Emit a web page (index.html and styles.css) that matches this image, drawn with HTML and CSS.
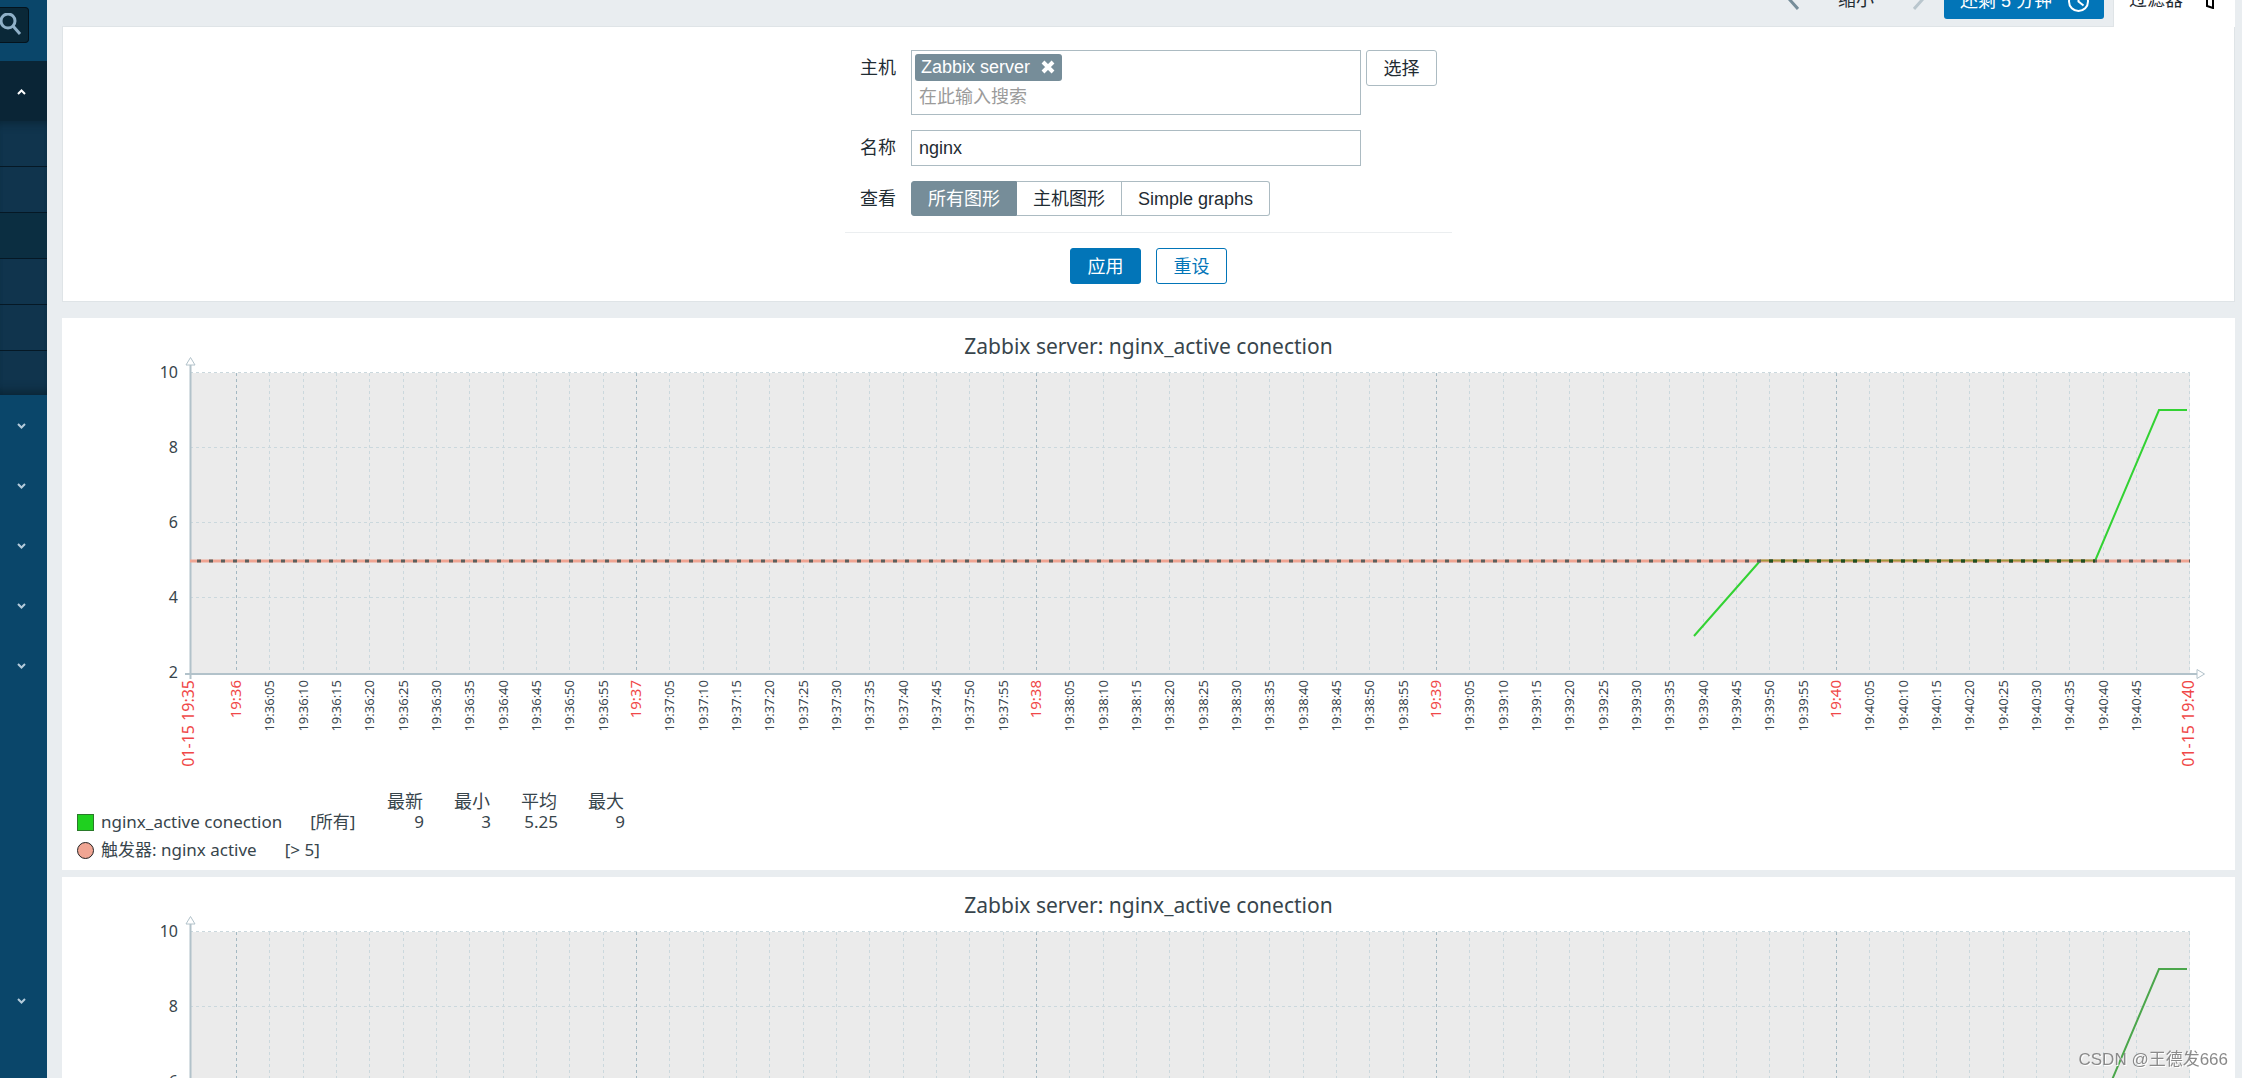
FILE: index.html
```html
<!DOCTYPE html>
<html lang="zh-CN">
<head>
<meta charset="utf-8">
<title>Zabbix</title>
<link rel="stylesheet" href="styles.css">
</head>
<body>
<div class="app">
  <aside class="sidebar">
    <button class="search" type="button" aria-label="搜索">
      <svg width="24" height="24" viewBox="0 0 24 24"><circle cx="9" cy="8" r="7"/><path d="M14 13l7 8" class="handle"/></svg>
    </button>
    <nav class="menu">
      <a class="item active" href="#" aria-label="监测"><svg class="chev" viewBox="0 0 9 6"><path d="M1 5l3.500-3.500L8 5"/></svg></a>
      <div class="submenu">
        <a class="sub" href="#" aria-label="仪表板"></a>
        <a class="sub" href="#" aria-label="问题"></a>
        <a class="sub current" href="#" aria-label="主机"></a>
        <a class="sub" href="#" aria-label="最新数据"></a>
        <a class="sub" href="#" aria-label="拓扑图"></a>
        <a class="sub" href="#" aria-label="自动发现"></a>
      </div>
      <a class="item" href="#" aria-label="服务"><svg class="chev" viewBox="0 0 9 6"><path d="M1 1l3.500 3.500L8 1"/></svg></a>
      <a class="item" href="#" aria-label="资产"><svg class="chev" viewBox="0 0 9 6"><path d="M1 1l3.500 3.500L8 1"/></svg></a>
      <a class="item" href="#" aria-label="报表"><svg class="chev" viewBox="0 0 9 6"><path d="M1 1l3.500 3.500L8 1"/></svg></a>
      <a class="item" href="#" aria-label="配置"><svg class="chev" viewBox="0 0 9 6"><path d="M1 1l3.500 3.500L8 1"/></svg></a>
      <a class="item" href="#" aria-label="管理"><svg class="chev" viewBox="0 0 9 6"><path d="M1 1l3.500 3.500L8 1"/></svg></a>
      <a class="item user" href="#" aria-label="用户设置"><svg class="chev" viewBox="0 0 9 6"><path d="M1 1l3.500 3.500L8 1"/></svg></a>
    </nav>
  </aside>

  <main class="content">
    <header class="tabs">
      <div class="time-nav">
        <button class="plain" type="button" aria-label="向前"><svg class="arrow" viewBox="0 0 11 20"><path d="M10 1L2 10l8 9"/></svg></button>
        <button class="plain" type="button">缩小</button>
        <button class="plain" type="button" aria-label="向后"><svg class="arrow off" viewBox="0 0 11 20"><path d="M1 1l8 9-8 9"/></svg></button>
      </div>
      <button class="period" type="button">还剩 5 分钟
        <svg width="21" height="21" viewBox="0 0 21 21"><circle cx="10.500" cy="10.500" r="9.500"/><path d="M10.500 4v6.500l5 4"/></svg>
      </button>
      <a class="filter-tab" href="#filter">过滤器
        <svg width="18" height="18" viewBox="0 0 18 18"><path d="M1 1h16l-4 7v9l-6-2V8z"/></svg>
      </a>
    </header>

    <form class="filter" id="filter">
      <div class="fields">
        <label for="host">主机</label>
        <div class="host-row">
          <div class="multiselect">
            <span class="tag">Zabbix server
              <button class="remove" type="button" aria-label="删除"><svg width="14" height="14" viewBox="0 0 14 14"><path d="M2 2l10 10M12 2L2 12"/></svg></button>
            </span>
            <input id="host" type="text" placeholder="在此输入搜索">
          </div>
          <button class="btn select" type="button">选择</button>
        </div>
        <label for="name">名称</label>
        <input class="name" id="name" type="text" value="nginx">
        <span class="label" id="show-label">查看</span>
        <div class="segmented" role="radiogroup" aria-labelledby="show-label">
          <input type="radio" name="show" id="show-all" checked><label for="show-all">所有图形</label>
          <input type="radio" name="show" id="show-host"><label for="show-host">主机图形</label>
          <input type="radio" name="show" id="show-simple"><label for="show-simple">Simple graphs</label>
        </div>
      </div>
      <div class="actions">
        <button class="btn primary" type="button">应用</button>
        <button class="btn outline" type="reset">重设</button>
      </div>
    </form>

    <section class="graph">
      <h2>Zabbix server: nginx_active conection</h2>
      <svg class="plot" data-line="#33d233" viewBox="0 0 2173 436"></svg>
      <table class="legend">
        <thead><tr><th></th><th>最新</th><th>最小</th><th>平均</th><th>最大</th></tr></thead>
        <tbody>
          <tr><td><div class="key"><i class="square"></i><span class="series-name">nginx_active conection</span>[所有]</div></td><td>9</td><td>3</td><td>5.25</td><td>9</td></tr>
          <tr><td colspan="5"><div class="key"><i class="circle"></i><span class="series-name">触发器: nginx active</span>[&gt; 5]</div></td></tr>
        </tbody>
      </table>
    </section>

    <section class="graph">
      <h2>Zabbix server: nginx_active conection</h2>
      <svg class="plot" data-line="#4ba64b" viewBox="0 0 2173 436"></svg>
    </section>
  </main>
</div>
<div class="watermark">CSDN @王德发666</div>
<script src="chart.js"></script>
</body>
</html>
```
FILE: chart.js
```js
const NS = 'http://www.w3.org/2000/svg';
const LEFT = 128, RIGHT = 2128, TOP = 18, BOTTOM = 319;
const MINUTE = 400, FIRST = 175;

function add(svg, tag, attrs, text) {
  const el = document.createElementNS(NS, tag);
  for (const key in attrs) el.setAttribute(key, attrs[key]);
  if (text) el.textContent = text;
  svg.appendChild(el);
}

function label(svg, x, cls, text) {
  add(svg, 'text', { class: cls, transform: `translate(${x + 4} 325) rotate(-90)` }, text);
}

function draw(svg) {
  add(svg, 'rect', { class: 'area', x: LEFT, y: TOP, width: RIGHT - LEFT, height: BOTTOM - TOP });

  [10, 8, 6, 4, 2].forEach((value, i) => {
    const y = TOP + i * 75 - .5;
    if (value > 2) add(svg, 'path', { class: 'grid', d: `M${LEFT} ${y}H${RIGHT}` });
    add(svg, 'text', { class: 'value', x: 116, y: y + 5 }, String(value));
  });

  for (let m = 0; m < 5; m++) {
    for (let s = 0; s < 60; s += 5) {
      if (m === 4 && s > 45) break;
      const x = Math.round(FIRST + m * MINUTE + s * MINUTE / 60) - .5;
      const major = s === 0;
      const hour = `19:${36 + m}`;
      add(svg, 'path', { class: major ? 'grid major' : 'grid', d: `M${x} ${TOP}V${BOTTOM}` });
      label(svg, x, major ? 'time major' : 'time', major ? hour : `${hour}:${String(s).padStart(2, '0')}`);
    }
  }
  add(svg, 'path', { class: 'grid', d: `M${RIGHT - .5} ${TOP}V${BOTTOM}` });
  label(svg, LEFT, 'time date', '01-15 19:35');
  label(svg, RIGHT, 'time date', '01-15 19:40');

  add(svg, 'path', { class: 'axis', d: `M${LEFT + .5} 10V${BOTTOM + 5}M${LEFT - 5} ${BOTTOM}H2135` });
  add(svg, 'path', { class: 'axis tip', d: 'M124 10h9l-4.500-7.500zM2135 314.500v9l7.500-4.500z' });

  add(svg, 'path', { class: 'trigger', d: `M${LEFT} 206H${RIGHT}` });
  add(svg, 'path', { class: 'series', stroke: svg.dataset.line, d: 'M1632 281L1698 206M2033 206L2097 55H2125' });
  add(svg, 'path', { class: 'overlap', d: 'M1698 205.500H2033' });
  add(svg, 'path', { class: 'trigger-dash', d: `M${LEFT + 7} 206H${RIGHT}` });
  add(svg, 'path', { class: 'trigger-dash dark', d: 'M1707 206H2033' });
}

document.querySelectorAll('.plot').forEach(draw);
```
FILE: styles.css
```css
* { box-sizing: border-box; }

body {
  margin: 0;
  background: #e9edf0;
  color: #1f2c33;
  font: 18px/20px "Liberation Sans", "Noto Sans CJK SC", sans-serif;
}

button, input { font: inherit; color: inherit; }
button { cursor: pointer; padding: 0; }
svg { display: block; fill: none; }

.app { display: flex; height: 100vh; overflow: hidden; }

/* Sidebar */
.sidebar {
  flex: 0 0 47px;
  display: flex;
  flex-direction: column;
  padding-top: 7px;
  background: #0a466a;
}
.search {
  width: 29px;
  height: 36px;
  margin-bottom: 18px;
  border: 1px solid #04131d;
  border-left: 0;
  border-radius: 0 4px 4px 0;
  background: #0a2838;
  flex: none;
}
.search svg { stroke: #8fb0c8; stroke-width: 3; margin-left: -1px; }
.menu { flex: 1; display: flex; flex-direction: column; padding-bottom: 48px; }
.item { flex: 0 0 60px; display: flex; align-items: center; padding: 2px 0 0 17px; }
.item.active { background: #0a2536; }
.item.user { margin-top: auto; }
.chev { width: 9px; height: 6px; stroke: #b4cbdb; stroke-width: 2; }
.active .chev { stroke: #fff; }
.submenu {
  flex: none;
  background: #10344d;
  box-shadow: inset 0 10px 10px -8px #0a2536, inset 0 -12px 10px -8px #0a2536;
}
.sub { display: block; height: 46px; border-bottom: 1px solid #051825; }
.sub:last-child { height: 44px; border: 0; }
.sub.current { background: #0b2e41; }

/* Header tabs, scrolled partly out of view */
.content { flex: 1; min-width: 0; padding: 0 7px 0 15px; }
.tabs {
  display: flex;
  justify-content: flex-end;
  height: 45px;
  margin-top: -19px;
}
.time-nav { display: flex; gap: 39px; height: 38px; margin-right: 20px; }
.plain { border: 0; background: none; }
.arrow { width: 11px; height: 20px; stroke: #768d99; stroke-width: 3; }
.arrow.off { stroke: #b9c6cd; }
.period {
  display: flex;
  align-items: center;
  gap: 16px;
  height: 36px;
  margin: 2px 9px 0 0;
  padding: 0 15px 0 16px;
  border: 0;
  border-radius: 3px;
  background: #0275b8;
  color: #fff;
}
.period svg { stroke: #fff; stroke-width: 2; }
.filter-tab {
  position: relative;
  display: flex;
  gap: 17px;
  height: 46px;
  padding: 9px 17px 0 15px;
  border-left: 1px solid #dfe4e7;
  background: #fff;
  color: inherit;
  text-decoration: none;
}
.filter-tab svg { stroke: #000; stroke-width: 2; margin-top: 1px; }

/* Filter form */
.filter {
  display: flex;
  flex-direction: column;
  align-items: center;
  padding: 23px 0 17px;
  border: 1px solid #dfe4e7;
  background: #fff;
}
.fields {
  display: grid;
  grid-template-columns: 51px 526px;
  gap: 15px 0;
  width: 607px;
  padding: 0 15px 16px;
  border-bottom: 1px solid #ebeef0;
}
.fields > label, .label { padding-top: 8px; }
.host-row { display: flex; align-items: flex-start; gap: 5px; }
.multiselect {
  width: 450px;
  height: 65px;
  padding: 3px;
  border: 1px solid #acbbc2;
}
.tag {
  display: inline-flex;
  align-items: center;
  gap: 11px;
  height: 27px;
  padding: 0 7px 2px 6px;
  border-radius: 3px;
  background: #768d99;
  color: #fff;
  vertical-align: top;
}
.remove { border: 0; background: none; }
.remove svg { stroke: #fff; stroke-width: 4; }
.multiselect input {
  display: block;
  width: 100%;
  height: 32px;
  padding: 0 4px;
  border: 0;
  outline: 0;
  background: none;
}
.multiselect input::placeholder { color: #9b9b9b; }
.btn {
  width: 71px;
  height: 36px;
  padding-top: 2px;
  border: 1px solid #acbbc2;
  border-radius: 3px;
  background: #fff;
}
.name {
  width: 450px;
  height: 36px;
  padding: 0 7px;
  border: 1px solid #acbbc2;
  background: #fff;
}
.segmented { display: flex; height: 35px; }
.segmented input { position: absolute; opacity: 0; pointer-events: none; }
.segmented label {
  display: flex;
  align-items: center;
  padding: 0 16px;
  border: 1px solid #acbbc2;
  border-left-width: 0;
}
.segmented label:first-of-type { border-left-width: 1px; border-radius: 3px 0 0 3px; }
.segmented label:last-of-type { border-radius: 0 3px 3px 0; }
.segmented input:checked + label { background: #768d99; border-color: #768d99; color: #fff; }
.actions { display: flex; gap: 15px; padding-top: 15px; }
.primary { background: #0275b8; border-color: #0275b8; color: #fff; }
.outline { border-color: #0275b8; color: #0275b8; }

/* Graphs */
.graph {
  margin-top: 16px;
  padding-bottom: 3px;
  background: #fff;
  color: #38454c;
  font-family: "Noto Sans", "Noto Sans CJK SC", sans-serif;
}
.graph + .graph { margin-top: 7px; }
.graph h2 {
  margin: 0;
  padding-top: 13px;
  height: 37px;
  font-size: 21px;
  line-height: 30px;
  font-weight: 400;
  text-align: center;
}
.plot { width: 100%; overflow: visible; }
.area { fill: #ebebeb; }
.grid { stroke: #cbd8dd; stroke-width: 1; stroke-dasharray: 3 3; }
.grid.major { stroke: #a3b8c2; }
.axis { stroke: #b2c2ca; stroke-width: 2; }
.axis.tip { fill: #fff; stroke-width: 1; }
.value { fill: #38454c; font-size: 16px; text-anchor: end; }
.time { fill: #38454c; font-size: 13px; text-anchor: end; }
.time.major { fill: #f04848; font-size: 15px; }
.time.date { fill: #f04848; font-size: 16px; }
.trigger { stroke: #efa593; stroke-width: 3; }
.trigger-dash { stroke: #5b5f5c; stroke-width: 3; stroke-dasharray: 4 8; }
.trigger-dash.dark { stroke: #20501f; }
.series { stroke-width: 2; }
.overlap { stroke: #a3983f; stroke-width: 2; }

.legend {
  margin-left: 15px;
  border-collapse: collapse;
  font-size: 17px;
  line-height: 22px;
}
.legend th, .legend td { width: 67px; height: 22px; padding: 0; font-weight: 400; text-align: right; }
.legend th { height: 20px; padding-right: 1px; font-size: 18px; line-height: 20px; }
.legend th:first-child, .legend td:first-child { width: 280px; text-align: left; }
.legend tr:last-child td[colspan] { height: 34px; }
.key { display: flex; align-items: center; height: 22px; white-space: nowrap; }
.series-name { margin: 0 28px 0 7px; }
.square, .circle { width: 17px; height: 17px; border: 1px solid #2a7a2a; background: #1fd01f; }
.circle { border-color: #222; border-radius: 50%; background: #f0a593; }

.watermark {
  position: fixed;
  right: 14px;
  bottom: 8px;
  color: #8a8a8a;
  font-size: 17px;
  text-shadow: 1px 1px 0 #fff;
}
```
